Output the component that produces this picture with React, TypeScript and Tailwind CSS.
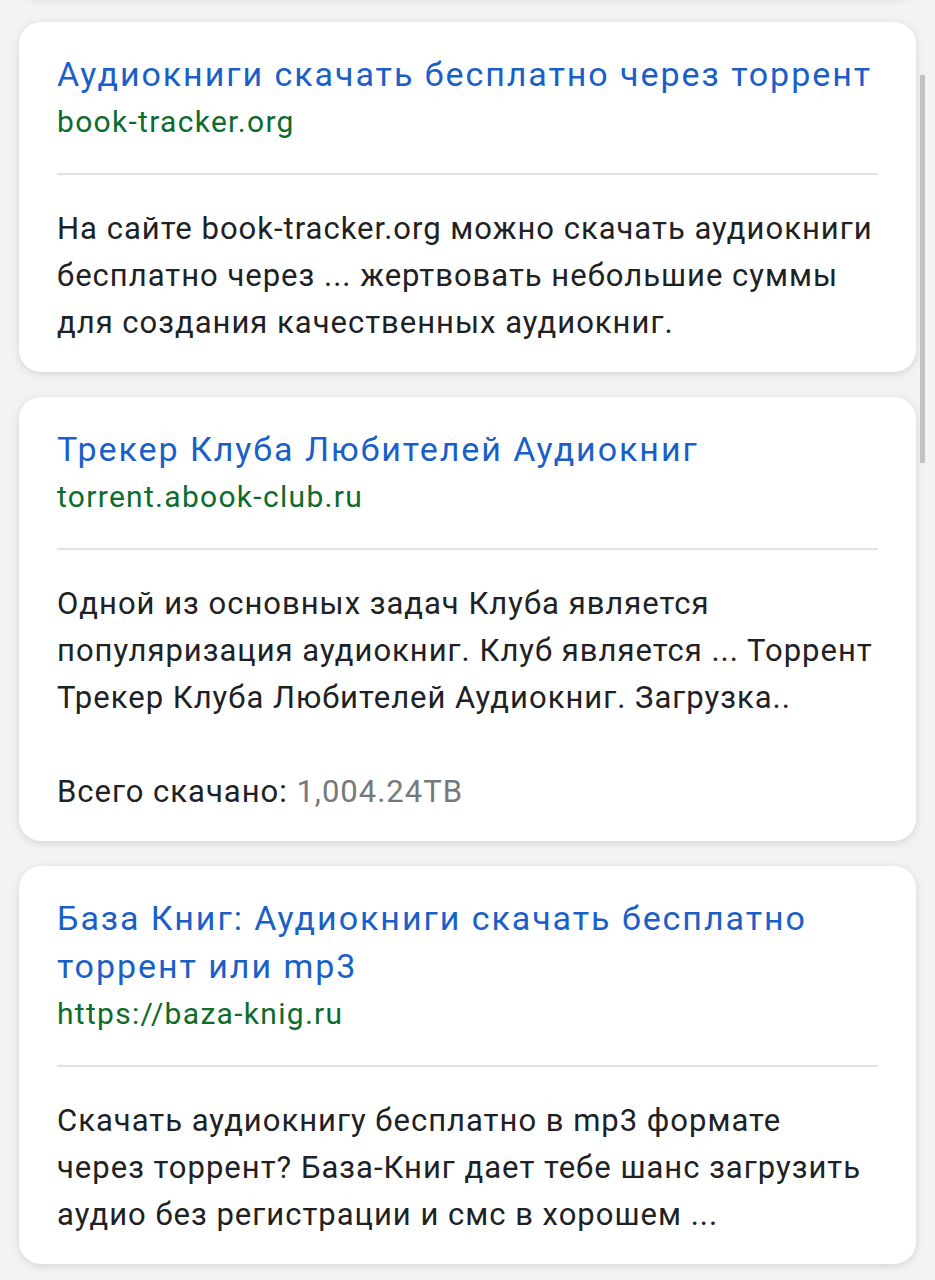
import React from 'react';

type Result = {
  title: string[];
  url: string;
  body: string[];
  extra?: { label: string; value: string };
};

const results: Result[] = [
  {
    title: ['Аудиокниги скачать бесплатно через торрент'],
    url: 'book-tracker.org',
    body: [
      'На сайте book-tracker.org можно скачать аудиокниги',
      'бесплатно через ... жертвовать небольшие суммы',
      'для создания качественных аудиокниг.',
    ],
  },
  {
    title: ['Трекер Клуба Любителей Аудиокниг'],
    url: 'torrent.abook-club.ru',
    body: [
      'Одной из основных задач Клуба является',
      'популяризация аудиокниг. Клуб является ... Торрент',
      'Трекер Клуба Любителей Аудиокниг. Загрузка..',
    ],
    extra: { label: 'Всего скачано:', value: '1,004.24TB' },
  },
  {
    title: ['База Книг: Аудиокниги скачать бесплатно', 'торрент или mp3'],
    url: 'https://baza-knig.ru',
    body: [
      'Скачать аудиокнигу бесплатно в mp3 формате',
      'через торрент? База-Книг дает тебе шанс загрузить',
      'аудио без регистрации и смс в хорошем ...',
    ],
  },
];

function ResultCard({ r }: { r: Result }) {
  return (
    <div className="bg-white rounded-[22px] shadow-[0_2px_8px_rgba(0,0,0,0.13)] px-[38px] pt-[28px] pb-[26px]">
      <div className="text-[34px] leading-[48px] text-[#1a5fc9] tracking-[1.95px]">
        {r.title.map((t) => (
          <div key={t} className="whitespace-nowrap">{t}</div>
        ))}
      </div>
      <div className="text-[30px] leading-[48px] text-[#0d6b2b] tracking-[1.3px] whitespace-nowrap">{r.url}</div>
      <div className="mt-[27px] h-[2px] bg-[#e3e3e3]" />
      <div className="mt-[30px] text-[31px] leading-[47px] text-[#202124] tracking-[1px]">
        {r.body.map((b) => (
          <div key={b} className="whitespace-nowrap">{b}</div>
        ))}
        {r.extra && (
          <div className="mt-[47px] whitespace-nowrap">
            {r.extra.label} <span className="text-[#75787c]">{r.extra.value}</span>
          </div>
        )}
      </div>
    </div>
  );
}

export default function App() {
  return (
    <div
      className="relative w-[935px] h-[1280px] overflow-hidden bg-[#f3f3f3] px-[19px]"
      style={{ fontFamily: 'Roboto, "Noto Sans", sans-serif' }}
    >
      <div className="flex flex-col gap-[25px]">
        {/* край предыдущей карточки */}
        <div className="bg-white rounded-[22px] shadow-[0_2px_8px_rgba(0,0,0,0.13)] h-[40px] -mt-[43px]" />
        {results.map((r) => (
          <ResultCard key={r.url} r={r} />
        ))}
      </div>
      {/* полоса прокрутки */}
      <div className="absolute left-[920px] top-[75px] w-[5px] h-[388px] bg-[#c2c2c2]" />
    </div>
  );
}
